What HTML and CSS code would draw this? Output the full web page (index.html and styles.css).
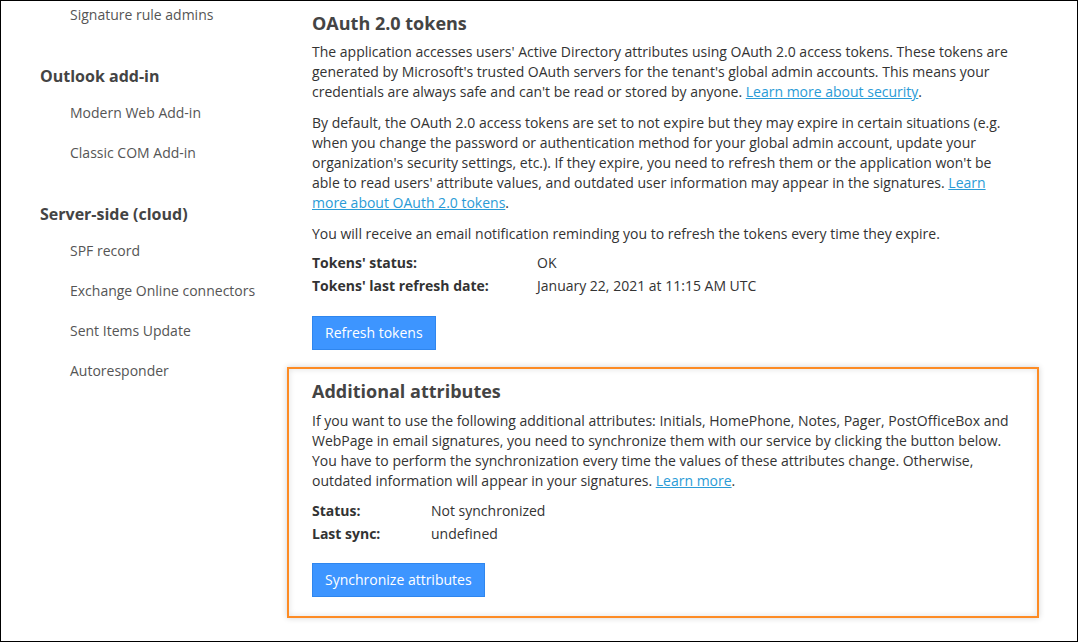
FILE: index.html
```html
<!DOCTYPE html>
<html lang="en">
<head>
<meta charset="utf-8">
<title>OAuth 2.0 tokens</title>
<link rel="stylesheet" href="styles.css">
</head>
<body>
<div class="frame">
  <nav class="sidebar">
    <ul class="nav-list nav-list--first">
      <li class="nav-item">Signature rule admins</li>
    </ul>
    <h3 class="nav-heading">Outlook add-in</h3>
    <ul class="nav-list">
      <li class="nav-item">Modern Web Add-in</li>
      <li class="nav-item">Classic COM Add-in</li>
    </ul>
    <h3 class="nav-heading">Server-side (cloud)</h3>
    <ul class="nav-list">
      <li class="nav-item">SPF record</li>
      <li class="nav-item">Exchange Online connectors</li>
      <li class="nav-item">Sent Items Update</li>
      <li class="nav-item">Autoresponder</li>
    </ul>
  </nav>
  <main class="main">
    <section class="section section--first">
      <h2 class="section-title">OAuth 2.0 tokens</h2>
      <p class="text">The application accesses users' Active Directory attributes using OAuth 2.0 access tokens. These tokens are generated by Microsoft's trusted OAuth servers for the tenant's global admin accounts. This means your credentials are always safe and can't be read or stored by anyone. <a class="link" href="#">Learn more about security</a>.</p>
      <p class="text">By default, the OAuth 2.0 access tokens are set to not expire but they may expire in certain situations (e.g. when you change the password or authentication method for your global admin account, update your organization's security settings, etc.). If they expire, you need to refresh them or the application won't be able to read users' attribute values, and outdated user information may appear in the signatures. <a class="link" href="#">Learn more about OAuth 2.0 tokens</a>.</p>
      <p class="text">You will receive an email notification reminding you to refresh the tokens every time they expire.</p>
      <dl class="info info--wide">
        <dt class="info-label">Tokens' status:</dt><dd class="info-value">OK</dd>
        <dt class="info-label">Tokens' last refresh date:</dt><dd class="info-value">January 22, 2021 at 11:15 AM UTC</dd>
      </dl>
      <button class="btn" type="button">Refresh tokens</button>
    </section>
    <section class="section section--highlight">
      <h2 class="section-title">Additional attributes</h2>
      <p class="text">If you want to use the following additional attributes: Initials, HomePhone, Notes, Pager, PostOfficeBox and WebPage in email signatures, you need to synchronize them with our service by clicking the button below. You have to perform the synchronization every time the values of these attributes change. Otherwise, outdated information will appear in your signatures. <a class="link" href="#">Learn more</a>.</p>
      <dl class="info info--narrow">
        <dt class="info-label">Status:</dt><dd class="info-value">Not synchronized</dd>
        <dt class="info-label">Last sync:</dt><dd class="info-value">undefined</dd>
      </dl>
      <button class="btn" type="button">Synchronize attributes</button>
    </section>
  </main>
</div>
</body>
</html>
```
FILE: styles.css
```css
* { box-sizing: border-box; }
html, body { margin: 0; padding: 0; background: #fff; }
body {
  font-family: "Open Sans", "Liberation Sans", Arial, sans-serif;
  font-size: 14px;
  color: #333;
}
.frame {
  width: 1078px;
  height: 642px;
  border: 1px solid #000;
  overflow: hidden;
  display: flex;
  background: #fff;
}
.sidebar {
  width: 286px;
  flex: none;
}
.nav-list {
  list-style: none;
  margin: 0;
  padding: 0;
}
.nav-item {
  padding: 10px 0 10px 69px;
  line-height: 20px;
  color: #555;
}
.nav-list--first .nav-item { padding-top: 4px; }
.nav-heading {
  margin: 29px 0 5px;
  padding-left: 39px;
  font-size: 16px;
  line-height: 24px;
  font-weight: 700;
  color: #444;
}
.main {
  width: 752px;
  flex: none;
  display: flex;
  flex-direction: column;
}
.section {
  border: 2px solid transparent;
  padding: 10px 23px 19px;
}
.section--first { padding: 8px 23px 15px; }
.section--highlight {
  border-color: #fd8b24;
  box-shadow: 0 0 6px rgba(0, 0, 0, 0.18), inset 0 0 6px rgba(0, 0, 0, 0.12);
}
.section-title {
  margin: 0 0 7px;
  font-size: 18px;
  line-height: 24px;
  font-weight: 700;
  color: #444;
}
.section--highlight .section-title { margin-bottom: 8px; }
.text {
  margin: 0 0 11px;
  line-height: 20px;
}
.text:last-of-type { margin-bottom: 0; }
.link {
  color: #2a9bd6;
  text-decoration: underline;
}
.info {
  display: grid;
  margin: 8px 0 19px;
  line-height: 23px;
}
.info--wide { grid-template-columns: 225px 1fr; margin-top: 7px; }
.info--narrow { grid-template-columns: 119px 1fr; margin-bottom: 18px; }
.info-label {
  font-weight: 700;
  color: #333;
}
.info-value { margin: 0; color: #333; }
.btn {
  display: block;
  font-family: inherit;
  font-size: 14px;
  line-height: 20px;
  padding: 6px 12px;
  color: #fff;
  background: #3d95ff;
  border: 1px solid #2f86ee;
  border-radius: 0;
}
```
